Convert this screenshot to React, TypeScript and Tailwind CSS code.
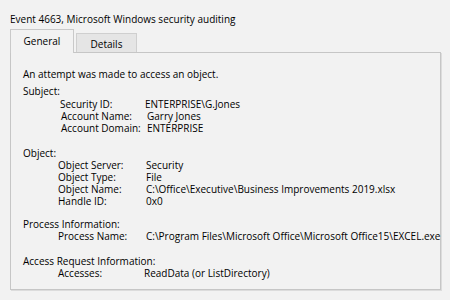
import React from "react";

const font = { fontFamily: '"Open Sans", "Noto Sans", sans-serif' };

function Row({ label, value, indent = "pl-[37px]", cols = "grid-cols-[86px_1fr]" }: { label: string; value: string; indent?: string; cols?: string }) {
  return (
    <div className={`grid h-[12px] items-center whitespace-nowrap ${indent} ${cols}`}>
      <span>{label}</span>
      <span>{value}</span>
    </div>
  );
}

export default function App() {
  return (
    <div className="w-[450px] h-[300px] bg-[#f2f2f2] text-[10px] leading-[12px] text-black relative overflow-hidden" style={font}>
      <div className="absolute left-[10px] top-[13px]">Event 4663, Microsoft Windows security auditing</div>

      <div className="absolute left-[10px] top-[29px] flex items-end">
        <div className="w-[64px] h-[24px] border border-b-0 border-[#c9c9c9] bg-[#f2f2f2] flex items-center justify-center relative z-10 pb-[2px]">
          General
        </div>
        <div className="ml-[2px] w-[61px] h-[20px] border border-b-0 border-[#cfcfcf] bg-[#e5e5e5] flex items-center justify-center">
          Details
        </div>
      </div>

      <div className="absolute left-[10px] top-[52px] w-[431px] h-[238px] border border-[#c6c6c6] shadow-[1px_1px_0_#dcdcdc]">
        <div className="pl-[12px] pt-[15px]">
          <div>An attempt was made to access an object.</div>
          <div className="mt-[5px]">Subject:</div>
          <div className="mt-[1px]">
            <Row label="Security ID:" value={"ENTERPRISE\\G.Jones"} indent="pl-[37px]" cols="grid-cols-[85px_1fr]" />
            <Row label="Account Name:" value="Garry Jones" indent="pl-[38px]" />
            <Row label="Account Domain:" value="ENTERPRISE" indent="pl-[38px]" cols="grid-cols-[86px_1fr]" />
          </div>
          <div className="mt-[13px]">Object:</div>
          <div>
            <Row label="Object Server:" value="Security" indent="pl-[35px]" cols="grid-cols-[88px_1fr]" />
            <Row label="Object Type:" value="File" indent="pl-[35px]" cols="grid-cols-[88px_1fr]" />
            <Row label="Object Name:" value={"C:\\Office\\Executive\\Business Improvements 2019.xlsx"} indent="pl-[35px]" cols="grid-cols-[88px_1fr]" />
            <Row label="Handle ID:" value="0x0" indent="pl-[35px]" cols="grid-cols-[88px_1fr]" />
          </div>
          <div className="mt-[11px]">Process Information:</div>
          <Row label="Process Name:" value={"C:\\Program Files\\Microsoft Office\\Microsoft Office15\\EXCEL.exe"} indent="pl-[35px]" cols="grid-cols-[88px_1fr]" />
          <div className="mt-[13px]">Access Request Information:</div>
          <Row label="Accesses:" value="ReadData (or ListDirectory)" indent="pl-[35px]" cols="grid-cols-[86px_1fr]" />
        </div>
      </div>
    </div>
  );
}
